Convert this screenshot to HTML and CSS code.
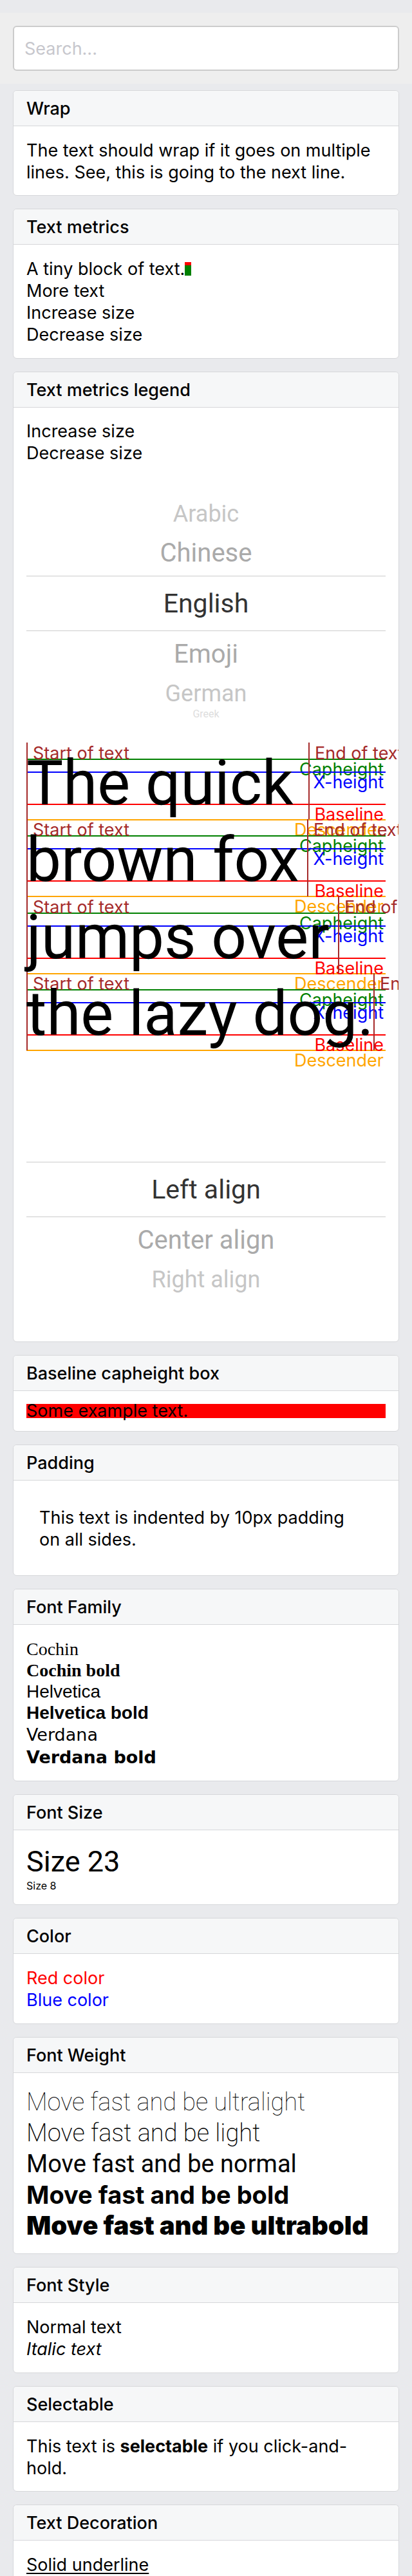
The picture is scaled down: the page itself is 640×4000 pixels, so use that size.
FILE: index.html
```html
<!DOCTYPE html>
<html lang="en">
<head>
<meta charset="utf-8">
<title>Text</title>
<meta name="viewport" content="width=device-width, initial-scale=1">
<link rel="stylesheet" href="styles.css">
</head>
<body>
<header class="search">
  <input class="search-input" type="search" placeholder="Search..." aria-label="Search">
</header>
<main class="cards">
  <section class="card">
    <h2 class="card-title">Wrap</h2>
    <div class="card-body card-body-wrapped">
      <p>The text should wrap if it goes on multiple lines. See, this is going to the next line.</p>
    </div>
  </section>

  <section class="card">
    <h2 class="card-title">Text metrics</h2>
    <div class="card-body">
      <p>A tiny block of text.<span class="meter"><span class="meter-x"></span></span></p>
      <p>More text</p>
      <button class="text-button" type="button">Increase size</button>
      <button class="text-button" type="button">Decrease size</button>
    </div>
  </section>

  <section class="card">
    <h2 class="card-title">Text metrics legend</h2>
    <div class="card-body card-body-even">
      <button class="text-button" type="button">Increase size</button>
      <button class="text-button" type="button">Decrease size</button>

      <div class="picker" role="radiogroup" aria-label="Language">
        <label class="option far above"><input type="radio" name="language">Arabic</label>
        <label class="option near above"><input type="radio" name="language">Chinese</label>
        <label class="option selected"><input type="radio" name="language" checked>English</label>
        <label class="option near below"><input type="radio" name="language">Emoji</label>
        <label class="option far below"><input type="radio" name="language">German</label>
        <label class="option edge below"><input type="radio" name="language">Greek</label>
      </div>

      <div class="legend">
        <div class="line">
          <span class="rule descender">Descender</span>
          <span class="rule baseline">Baseline</span>
          <span class="rule capheight">Capheight</span>
          <span class="rule xheight">X-height</span>
          <span class="mark">Start of text</span>
          <span class="mark" style="left: 438px">End of text</span>
          <span class="sample">The quick</span>
        </div>
        <div class="line">
          <span class="rule descender">Descender</span>
          <span class="rule baseline">Baseline</span>
          <span class="rule capheight">Capheight</span>
          <span class="rule xheight">X-height</span>
          <span class="mark">Start of text</span>
          <span class="mark" style="left: 436px">End of text</span>
          <span class="sample">brown fox</span>
        </div>
        <div class="line">
          <span class="rule descender">Descender</span>
          <span class="rule baseline">Baseline</span>
          <span class="rule capheight">Capheight</span>
          <span class="rule xheight">X-height</span>
          <span class="mark">Start of text</span>
          <span class="mark" style="left: 484px">End of text</span>
          <span class="sample">jumps over</span>
        </div>
        <div class="line">
          <span class="rule descender">Descender</span>
          <span class="rule baseline">Baseline</span>
          <span class="rule capheight">Capheight</span>
          <span class="rule xheight">X-height</span>
          <span class="mark">Start of text</span>
          <span class="mark" style="left: 539px">End of text</span>
          <span class="sample">the lazy dog.</span>
        </div>
      </div>

      <div class="picker" role="radiogroup" aria-label="Alignment">
        <label class="option selected"><input type="radio" name="alignment" checked>Left align</label>
        <label class="option near below"><input type="radio" name="alignment">Center align</label>
        <label class="option far below"><input type="radio" name="alignment">Right align</label>
      </div>
    </div>
  </section>

  <section class="card">
    <h2 class="card-title">Baseline capheight box</h2>
    <div class="card-body card-body-even">
      <p class="cap-box">Some example text.</p>
    </div>
  </section>

  <section class="card">
    <h2 class="card-title">Padding</h2>
    <div class="card-body card-body-wrapped">
      <p class="padded">This text is indented by 10px padding on all sides.</p>
    </div>
  </section>

  <section class="card">
    <h2 class="card-title">Font Family</h2>
    <div class="card-body">
      <p class="cochin">Cochin</p>
      <p class="cochin bold">Cochin bold</p>
      <p class="helvetica">Helvetica</p>
      <p class="helvetica bold">Helvetica bold</p>
      <p class="verdana">Verdana</p>
      <p class="verdana bold">Verdana bold</p>
    </div>
  </section>

  <section class="card">
    <h2 class="card-title">Font Size</h2>
    <div class="card-body">
      <p class="size-23">Size 23</p>
      <p class="size-8">Size 8</p>
    </div>
  </section>

  <section class="card">
    <h2 class="card-title">Color</h2>
    <div class="card-body">
      <p class="red">Red color</p>
      <p class="blue">Blue color</p>
    </div>
  </section>

  <section class="card">
    <h2 class="card-title">Font Weight</h2>
    <div class="card-body weights">
      <p class="ultralight">Move fast and be ultralight</p>
      <p class="light">Move fast and be light</p>
      <p>Move fast and be normal</p>
      <p class="heavy bold">Move fast and be bold</p>
      <p class="heavy ultrabold">Move fast and be ultrabold</p>
    </div>
  </section>

  <section class="card">
    <h2 class="card-title">Font Style</h2>
    <div class="card-body">
      <p>Normal text</p>
      <p class="italic">Italic text</p>
    </div>
  </section>

  <section class="card">
    <h2 class="card-title">Selectable</h2>
    <div class="card-body card-body-wrapped">
      <p>This text is <b>selectable</b> if you click-and-hold.</p>
    </div>
  </section>

  <section class="card card-last">
    <h2 class="card-title">Text Decoration</h2>
    <div class="card-body">
      <p class="underline">Solid underline</p>
    </div>
  </section>
</main>
</body>
</html>
```

FILE: styles.css
```css
* {
  box-sizing: border-box;
}

body {
  margin: 0;
  padding-top: 20px;
  background: #e9eaed;
  color: #000;
  font: 27px/34px Inter, "Liberation Sans", sans-serif;
}

p {
  margin: 0;
}

.search {
  padding: 20px;
  background: #eee;
}

.search-input {
  display: block;
  width: 100%;
  height: 70px;
  padding: 0 16px;
  border: 2px solid #ccc;
  border-radius: 6px;
  background: #fff;
  color: #000;
  font: inherit;
  appearance: none;
}

.search-input::placeholder {
  color: #c7c7cd;
  opacity: 1;
}

.cards {
  display: flex;
  flex-direction: column;
  gap: 20px;
  padding: 10px 20px 0;
}

.card {
  overflow: hidden;
  border: 1px solid #d6d7da;
  border-radius: 6px;
  background: #fff;
}

.card-title {
  margin: 0;
  padding: 11px 20px 9px;
  border-bottom: 1px solid #d6d7da;
  background: #f6f7f8;
  font-size: 27px;
  font-weight: 500;
  line-height: 34px;
}

.card-body {
  padding: 21px 20px 19px;
}

.card-body-wrapped {
  padding-bottom: 18px;
}

.card-body-even {
  padding: 20px;
}

.card-last {
  border-bottom: 0;
  border-radius: 6px 6px 0 0;
}

.card-last .card-body {
  padding-bottom: 0;
}

.text-button {
  display: block;
  padding: 0;
  border: 0;
  background: none;
  color: inherit;
  font: inherit;
}

.meter {
  display: inline-flex;
  align-items: flex-end;
  width: 10px;
  height: 21px;
  background: red;
  vertical-align: bottom;
  margin-bottom: 7px;
}

.meter-x {
  width: 10px;
  height: 16px;
  background: green;
}

/* Wheel picker: rows get shorter and fainter away from the selection */
.picker {
  display: grid;
  grid-template-rows: 1fr 14px 51px 71px 86px 71px 51px 14px 1fr;
  height: 432px;
  font-family: Roboto, "Liberation Sans", sans-serif;
  text-align: center;
}

.option {
  position: relative;
  display: flex;
  align-items: center;
  justify-content: center;
}

.option input {
  position: absolute;
  margin: 0;
  opacity: 0;
}

.option.selected {
  grid-row: 5;
  border: solid #ccc;
  border-width: 1px 0;
  color: #333;
  font-size: 41px;
}

.option.near {
  color: #aaa;
  font-size: 40px;
}

.option.near.above {
  grid-row: 4;
}

.option.near.below {
  grid-row: 6;
}

.option.far {
  color: #c6c6c6;
  font-size: 36px;
}

.option.far.above {
  grid-row: 3;
}

.option.far.below {
  grid-row: 7;
}

.option.edge {
  grid-row: 8;
  color: #ddd;
  font-size: 16px;
  line-height: 14px;
}

/* Metric guides are drawn over and under each sample line */
.line {
  position: relative;
  height: 120px;
}

.line:nth-child(odd) {
  height: 119px;
}

.rule {
  position: absolute;
  left: 0;
  right: 0;
  padding-right: 3px;
  border-top: 2px solid;
  line-height: 30px;
  text-align: right;
}

.capheight {
  top: 25px;
  color: green;
}

.xheight {
  top: 45px;
  color: blue;
}

.baseline {
  top: 95px;
  color: red;
}

.descender {
  top: 119px;
  color: orange;
}

.mark {
  position: absolute;
  top: 0;
  bottom: 0;
  left: 0;
  padding-left: 8px;
  border-left: 2px solid brown;
  color: brown;
  white-space: nowrap;
}

.sample {
  position: absolute;
  top: 0;
  left: 0;
  font-family: Roboto, "Liberation Sans", sans-serif;
  font-size: 96px;
  line-height: 126px;
  white-space: nowrap;
}

.cap-box {
  background: red;
  line-height: 22px;
}

.padded {
  padding: 20px 40px 20px 20px;
}

.bold {
  font-weight: 700;
}

.cochin {
  font-family: Cochin, "Liberation Serif", serif;
  font-size: 28px;
  line-height: 33px;
}

.helvetica {
  font-family: "Liberation Sans", sans-serif;
  font-size: 28px;
  line-height: 33px;
}

.verdana {
  font-family: "DejaVu Sans", sans-serif;
  line-height: 35px;
}

.size-23 {
  font-family: Roboto, "Liberation Sans", sans-serif;
  font-size: 45px;
  line-height: 55px;
}

.size-8 {
  font-size: 16px;
  line-height: 20px;
}

.red {
  color: red;
}

.blue {
  color: blue;
}

.weights {
  font-family: Roboto, "Liberation Sans", sans-serif;
  font-size: 38px;
  line-height: 48px;
}

.heavy {
  font-family: Inter, "Liberation Sans", sans-serif;
}

.ultralight {
  font-weight: 100;
}

.light {
  font-weight: 200;
}

.ultrabold {
  font-size: 40px;
  font-weight: 900;
}

.italic {
  font-style: italic;
}

.underline {
  text-decoration: underline;
  text-decoration-thickness: 2px;
  text-underline-offset: 3px;
}
```
